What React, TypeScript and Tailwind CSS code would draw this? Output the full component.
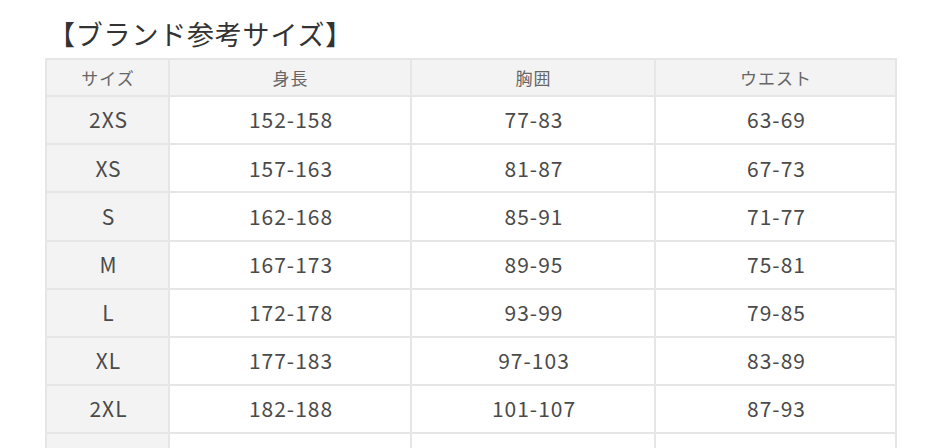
const rows = [
  ['2XS', '152-158', '77-83', '63-69'],
  ['XS', '157-163', '81-87', '67-73'],
  ['S', '162-168', '85-91', '71-77'],
  ['M', '167-173', '89-95', '75-81'],
  ['L', '172-178', '93-99', '79-85'],
  ['XL', '177-183', '97-103', '83-89'],
  ['2XL', '182-188', '101-107', '87-93'],
  ['', '', '', ''],
]

const headers = ['サイズ', '身長', '胸囲', 'ウエスト']

export default function App() {
  return (
    <div
      className="h-[448px] w-[940px] overflow-hidden bg-white"
      style={{ fontFamily: '"Noto Sans CJK JP", "Noto Sans", sans-serif' }}
    >
      <h1 className="ml-[48px] pt-[15px] text-[27px] leading-[37px] tracking-[0.8px] text-[#333]">
        【ブランド参考サイズ】
      </h1>
      <div className="ml-[45px] mt-[6px] grid w-[852px] grid-cols-[121px_240px_242px_239px] gap-[2px] bg-[#e6e6e6] p-[2px]">
        {headers.map((h) => (
          <div
            key={h}
            className="flex h-[35px] items-center justify-center bg-[#f3f3f3] pl-[1px] text-[17px] tracking-[1px] text-[#666]"
          >
            {h}
          </div>
        ))}
        {rows.map((r, i) =>
          r.map((c, j) => (
            <div
              key={`${i}-${j}`}
              className={`flex h-[46.2px] items-center justify-center pl-[2px] text-[21px] tracking-[1px] text-[#4a4a4a] ${
                j === 0 ? 'bg-[#f3f3f3]' : 'bg-white'
              }`}
            >
              {c}
            </div>
          ))
        )}
      </div>
    </div>
  )
}
